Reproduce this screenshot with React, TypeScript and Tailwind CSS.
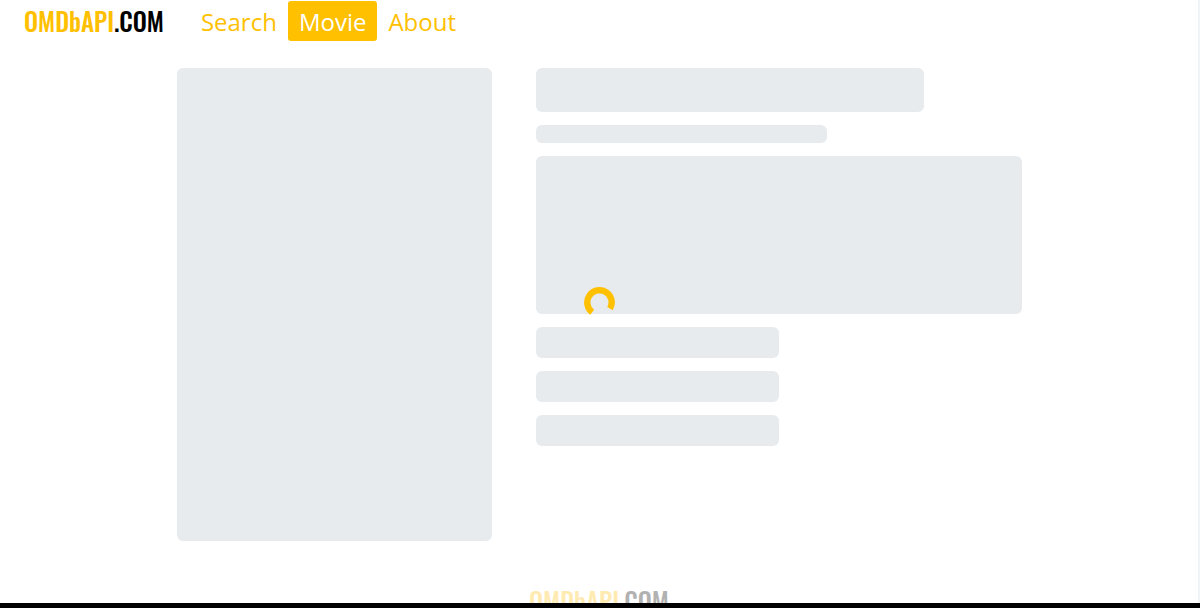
import React from "react";

function Logo() {
  return (
    <a
      href="#home"
      className="font-['Oswald','Liberation_Sans_Narrow',sans-serif] text-[25px] leading-8 font-medium whitespace-nowrap"
    >
      <span className="text-[#ffc000]">OMDbAPI</span>
      <span className="text-black">.COM</span>
    </a>
  );
}

function NavLink({ label, active = false }: { label: string; active?: boolean }) {
  return (
    <a
      href={`#${label.toLowerCase()}`}
      aria-current={active ? "page" : undefined}
      className={`flex h-10 items-center rounded-[3px] px-[11px] pt-0.5 text-[24px] leading-9 ${
        active ? "bg-[#ffc000] text-white" : "text-[#ffc000]"
      }`}
    >
      {label}
    </a>
  );
}

function Block({ className }: { className: string }) {
  return <div className={`rounded-md bg-[#e7ebee] ${className}`} />;
}

function Spinner() {
  return (
    <svg
      role="status"
      aria-label="Loading"
      viewBox="0 0 32 32"
      className="absolute top-[286px] left-1/2 size-8 -translate-x-1/2"
    >
      <path
        d="M9.2 26.2 A12.2 12.2 0 1 1 27 22.6"
        fill="none"
        stroke="#ffc000"
        strokeWidth="6.4"
      />
    </svg>
  );
}

export default function App() {
  return (
    <div className="flex h-screen flex-col overflow-hidden border-b-[5px] border-black bg-white font-['Open_Sans','Noto_Sans',sans-serif]">
      <div className="relative flex min-h-0 flex-1 flex-col border-r-2 border-[#f1f4f7]">
        <header className="flex shrink-0 items-center px-6 pt-px">
          <Logo />
          <nav className="ml-[26px] flex items-center">
            <NavLink label="Search" />
            <NavLink label="Movie" active />
            <NavLink label="About" />
          </nav>
        </header>

        <main
          aria-busy="true"
          className="mx-auto mt-[27px] flex w-full max-w-[845px] shrink-0 gap-11"
        >
          <Block className="aspect-[2/3] w-[315px] shrink-0" />
          <div className="flex flex-1 flex-col gap-[13px]">
            <Block className="h-11 w-4/5" />
            <Block className="h-[18px] w-3/5" />
            <Block className="h-[158px] w-full" />
            <Block className="h-[31px] w-1/2" />
            <Block className="h-[31px] w-1/2" />
            <Block className="h-[31px] w-1/2" />
          </div>
        </main>

        <footer className="mt-11 flex shrink-0 justify-center opacity-30">
          <Logo />
        </footer>
        <Spinner />
      </div>
    </div>
  );
}
